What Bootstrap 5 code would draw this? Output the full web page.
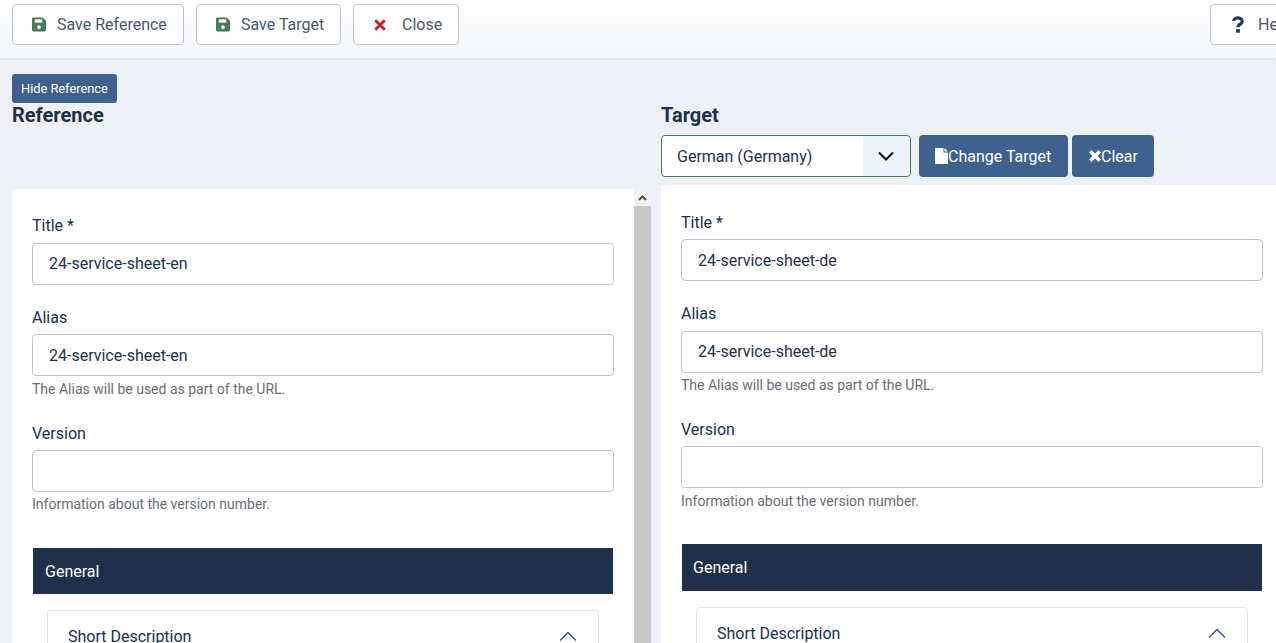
<!DOCTYPE html>
<html lang="en">
<head>
<meta charset="utf-8">
<title>Compare</title>
<link href="https://cdn.jsdelivr.net/npm/bootstrap@5.3.0/dist/css/bootstrap.min.css" rel="stylesheet">
<style>
html,body{height:643px;overflow:hidden}
body{background:#edf1f6;font-family:Roboto,"Liberation Sans",sans-serif;font-size:16px;color:#132f53}
.topbar{height:58px;padding:4px 0 0 12px;background:linear-gradient(180deg,#fff 0%,#f4f6fa 100%);box-shadow:0 1px 3px rgba(30,50,90,.12);gap:12px}
.tool-btn{height:41px;background:#fff;border:1px solid #b9c4d8;border-radius:4px;color:#495667;font-size:16px;line-height:1;display:flex;align-items:center;padding:0;flex:none}
.tool-btn:hover{background:#fff;color:#495667;border-color:#b9c4d8}
.tool-btn svg{flex:none}
.w-saveref{width:172px;padding-left:19px;gap:11px}
.w-savetgt{width:145px;padding-left:19px;gap:11px}
.w-close{width:106px;padding-left:20px;gap:16px}
.w-help{width:110px;padding-left:21px;gap:14px;margin-left:739px}
.cols{padding:16px 0 0 12px;gap:10px;width:1300px}
.col-ref{width:639px;flex:none}
.col-tgt{width:622px;flex:none}
.hide-btn{background:#3f618e;color:#fff;border:0;border-radius:3px;font-size:12.8px;height:29px;width:105px;line-height:1;padding:2px 0 0 9px;display:block;text-align:left;white-space:nowrap}
.hide-btn:hover{background:#3f618e;color:#fff}
.col-title{font-size:20px;font-weight:700;line-height:24px;color:#1f2f47;margin:0}
.head-ref{height:115px}
.head-tgt{height:111px;padding-top:29px}
.tgt-row{margin-top:8px;gap:8px}
.tgt-select{width:250px;height:42px;flex:none;border:1px solid #457d54;border-radius:4px;padding:0 60px 0 15px;font-size:16px;color:#22324d;line-height:42px;background-color:#fff;background-image:url("data:image/svg+xml,%3Csvg xmlns='http://www.w3.org/2000/svg' viewBox='0 0 16 16'%3E%3Cpath fill='none' stroke='%23111' stroke-width='2' d='M1 4.500l7 7 7-7'/%3E%3C/svg%3E"),linear-gradient(#eef3fa,#eef3fa);background-repeat:no-repeat,no-repeat;background-position:right 16px center,right 0 center;background-size:16px 16px,47px 100%}
.act-btn{height:42px;background:#3f618e;color:#fff;border:0;border-radius:4px;font-size:16px;padding:2px 16px 0;display:flex;align-items:center;flex:none}
.act-btn svg{margin-top:-2px}
.act-btn:hover{background:#3f618e;color:#fff}
.act-change{width:149px}
.act-clear{width:82px;margin-left:-4px;padding-left:17px}
.panel-wrap{align-items:stretch}
.panel{background:#fff;padding:25px 20px 0;width:622px;flex:none}
.panel-tgt{padding-top:26px}
.scroll-strip{width:17px;flex:none;background:#c8c8c8;height:460px}
.scroll-cap{height:17px;background:#f1f1f1;display:flex;align-items:center;justify-content:center}
.fld{margin-bottom:21px}
.fld-spaced{margin-bottom:24px}
.fld-label{display:block;line-height:24px;margin-bottom:4px;color:#132f53}
.fld-label-wide{margin-bottom:5px}
.fld-input{height:42px;border:1px solid #b9c4d8;border-radius:4px;padding:0 16px 2px;font-size:16px;color:#22324d;background:#fff}
.fld-input-low{padding-bottom:0}
.fld-hint{font-size:14px;line-height:17px;color:#666e78;margin-top:4px}
.fld-hint-wide{margin-top:5px}
.group-box{margin:35px 1px 0;background:#fff}
.group-tgt{margin-top:34px}
.group-head{background:#20304a;color:#fff;height:46px;line-height:48px;padding:0 12px;font-size:16px}
.group-tgt .group-head{height:47px;padding-left:11px}
.group-body{padding:16px 14px 0}
.acc-box{border:1px solid #dfe3ea;border-radius:4px;height:120px;padding:14px 20px;display:flex;justify-content:space-between;align-items:flex-start;color:#132f53;line-height:24px}
.acc-box svg{margin-top:6px;margin-right:1px}
</style>
</head>
<body>
<header class="topbar d-flex align-items-start">
  <button class="btn tool-btn w-saveref" type="button">
    <svg width="14" height="15" viewBox="0 0 15 15"><path fill="#457d54" d="M1.5 0H11.5L15 3.5V13.5A1.5 1.5 0 0 1 13.5 15H1.5A1.5 1.5 0 0 1 0 13.5V1.500A1.500 1.500 0 0 1 1.500 0Z"/><rect x="3" y="2" width="8" height="3.500" fill="#fff"/><circle cx="7.500" cy="10.300" r="2" fill="#fff"/></svg>
    <span>Save Reference</span>
  </button>
  <button class="btn tool-btn w-savetgt" type="button">
    <svg width="14" height="15" viewBox="0 0 15 15"><path fill="#457d54" d="M1.5 0H11.5L15 3.5V13.5A1.5 1.5 0 0 1 13.5 15H1.5A1.5 1.5 0 0 1 0 13.5V1.500A1.500 1.500 0 0 1 1.500 0Z"/><rect x="3" y="2" width="8" height="3.500" fill="#fff"/><circle cx="7.500" cy="10.300" r="2" fill="#fff"/></svg>
    <span>Save Target</span>
  </button>
  <button class="btn tool-btn w-close" type="button">
    <svg width="12" height="12" viewBox="0 0 14 14"><path stroke="#c8201f" stroke-width="3.400" d="M1.500 1.500l11 11M12.500 1.500l-11 11"/></svg>
    <span>Close</span>
  </button>
  <button class="btn tool-btn w-help" type="button">
    <svg width="12" height="17" viewBox="0 0 12 17"><path fill="none" stroke="#1f3a5f" stroke-width="3.200" d="M1.600 5A4.300 3.400 0 1 1 8.400 8C6.600 9 6 9.800 6 11.300"/><rect x="4.100" y="13" width="3.800" height="3.800" rx=".6" fill="#1f3a5f"/></svg>
    <span>Help</span>
  </button>
</header>
<main class="cols d-flex align-items-start">
  <section class="col-ref">
    <div class="head-ref">
      <button class="btn hide-btn" type="button">Hide Reference</button>
      <h2 class="col-title">Reference</h2>
    </div>
    <div class="d-flex panel-wrap">
      <div class="panel">
        <div class="fld">
          <label class="fld-label fld-label-wide">Title *</label>
          <input class="form-control fld-input" value="24-service-sheet-en">
        </div>
        <div class="fld fld-spaced">
          <label class="fld-label">Alias</label>
          <input class="form-control fld-input fld-input-low" value="24-service-sheet-en">
          <div class="fld-hint fld-hint-wide">The Alias will be used as part of the URL.</div>
        </div>
        <div class="fld">
          <label class="fld-label">Version</label>
          <input class="form-control fld-input" value="">
          <div class="fld-hint">Information about the version number.</div>
        </div>
        <div class="group-box">
          <div class="group-head">General</div>
          <div class="group-body">
            <div class="acc-box"><span>Short Description</span>
              <svg width="18" height="10" viewBox="0 0 18 10"><path fill="none" stroke="#2a5080" stroke-width="1.300" d="M1 9.500l8-8 8 8"/></svg>
            </div>
          </div>
        </div>
      </div>
      <div class="scroll-strip">
        <div class="scroll-cap"><svg width="9" height="6" viewBox="0 0 9 6"><path fill="none" stroke="#505050" stroke-width="2" d="M1 5l3.500-3.500L8 5"/></svg></div>
      </div>
    </div>
  </section>
  <section class="col-tgt">
    <div class="head-tgt">
      <h2 class="col-title">Target</h2>
      <div class="tgt-row d-flex">
        <select class="form-select tgt-select"><option>German (Germany)</option></select>
        <button class="btn act-btn act-change" type="button">
          <svg width="13" height="16" viewBox="0 0 13 16"><path fill="#fff" d="M0 0H8.500V4.500H13V16H0ZM9.500 0L13 3.500H9.500Z"/></svg>
          <span>Change Target</span>
        </button>
        <button class="btn act-btn act-clear" type="button">
          <svg width="12" height="12" viewBox="0 0 12 12"><path stroke="#fff" stroke-width="3.400" d="M1.200 1.200l9.600 9.600M10.800 1.200l-9.600 9.600"/></svg>
          <span>Clear</span>
        </button>
      </div>
    </div>
    <div class="panel panel-tgt">
      <div class="fld">
        <label class="fld-label">Title *</label>
        <input class="form-control fld-input fld-input-low" value="24-service-sheet-de">
      </div>
      <div class="fld fld-spaced">
        <label class="fld-label fld-label-wide">Alias</label>
        <input class="form-control fld-input" value="24-service-sheet-de">
        <div class="fld-hint">The Alias will be used as part of the URL.</div>
      </div>
      <div class="fld">
        <label class="fld-label">Version</label>
        <input class="form-control fld-input" value="">
        <div class="fld-hint fld-hint-wide">Information about the version number.</div>
      </div>
      <div class="group-box group-tgt">
        <div class="group-head">General</div>
        <div class="group-body">
          <div class="acc-box"><span>Short Description</span>
            <svg width="18" height="10" viewBox="0 0 18 10"><path fill="none" stroke="#2a5080" stroke-width="1.300" d="M1 9.500l8-8 8 8"/></svg>
          </div>
        </div>
      </div>
    </div>
  </section>
</main>
<script src="https://cdn.jsdelivr.net/npm/bootstrap@5.3.0/dist/js/bootstrap.bundle.min.js"></script>
</body>
</html>
